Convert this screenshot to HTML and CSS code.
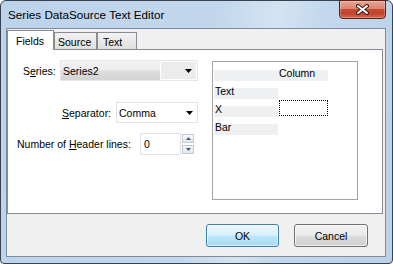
FILE: index.html
```html
<!DOCTYPE html>
<html>
<head>
<meta charset="utf-8">
<title>Series DataSource Text Editor</title>
<link rel="stylesheet" href="styles.css">
</head>
<body>
<div class="window">
  <div class="titlebar">
    <span class="title">Series DataSource Text Editor</span>
    <div class="close">
      <svg width="13" height="11" viewBox="0 0 13 11">
        <path d="M2 2 L11 9 M11 2 L2 9" stroke="#3b1a14" stroke-width="4" stroke-linecap="round"/>
        <path d="M2 2 L11 9 M11 2 L2 9" stroke="#ffffff" stroke-width="2" stroke-linecap="round"/>
      </svg>
    </div>
  </div>
  <div class="client">
    <div class="tabs">
      <div class="tab sel t-fields">Fields</div>
      <div class="tab t-source">Source</div>
      <div class="tab t-text">Text</div>
    </div>
    <div class="panel">
      <div class="form">
        <div class="row r1">
          <span class="lbl l1">S<u>e</u>ries:</span>
          <div class="combo ro">
            <span class="val">Series2</span>
            <span class="ddbox">
              <svg width="7" height="4" viewBox="0 0 7 4"><polygon points="0,0 7,0 3.5,4" fill="#000"/></svg>
            </span>
          </div>
        </div>
        <div class="row r2">
          <span class="lbl l2"><u>S</u>eparator:</span>
          <div class="combo ed">
            <span class="val">Comma</span>
            <svg class="arr" width="7" height="4" viewBox="0 0 7 4"><polygon points="0,0 7,0 3.5,4" fill="#000"/></svg>
          </div>
        </div>
        <div class="row r3">
          <span class="lbl l3">Number of <u>H</u>eader lines:</span>
          <div class="edit"><span class="val">0</span></div>
          <div class="spin">
            <span class="sb up"><svg width="5" height="3" viewBox="0 0 5 3"><polygon points="0,3 5,3 2.5,0" fill="#4a5878"/></svg></span>
            <span class="sb dn"><svg width="5" height="3" viewBox="0 0 5 3"><polygon points="0,0 5,0 2.5,3" fill="#4a5878"/></svg></span>
          </div>
        </div>
      </div>
      <div class="grid">
        <div class="grow hdr"><div class="fc"></div><div class="dc band">Column</div></div>
        <div class="grow"><div class="fc">Text</div><div class="dc"></div></div>
        <div class="grow"><div class="fc">X</div><div class="dc"><div class="focus"></div></div></div>
        <div class="grow"><div class="fc">Bar</div><div class="dc"></div></div>
      </div>
    </div>
    <div class="buttons">
      <div class="btn ok">OK</div>
      <div class="btn cancel">Cancel</div>
    </div>
  </div>
</div>
</body>
</html>
```
FILE: styles.css
```css
* { box-sizing: border-box; }
html, body { margin: 0; padding: 0; }
body {
  width: 393px;
  height: 264px;
  overflow: hidden;
  background: #ffffff;
  font-family: "Liberation Sans", Arial, sans-serif;
  font-size: 10.5px;
  color: #000;
}
u { text-decoration: underline; text-underline-offset: 1px; }

.window {
  width: 393px;
  height: 264px;
  border: 1px solid #39434f;
  border-radius: 6px 6px 4px 4px;
  background: linear-gradient(100deg, #bcd3ea 0%, #c2d7ec 50%, #d3e3f2 64%, #c3d8ed 74%, #bad1e9 100%);
  padding: 0 6px 6px 5px;
  display: flex;
  flex-direction: column;
}

.titlebar {
  height: 27px;
  flex: none;
  display: flex;
  align-items: flex-start;
}
.title {
  font-size: 11.7px;
  line-height: 14px;
  margin: 7px 0 0 2px;
  color: #000;
}
.close {
  margin-left: auto;
  margin-top: -1px;
  width: 47px;
  height: 19px;
  border: 1px solid #5a2017;
  border-radius: 0 0 4px 4px;
  background: linear-gradient(#e8a697 0%, #dd8672 44%, #c84a33 50%, #c2412a 72%, #d5674f 100%);
  display: flex;
  align-items: center;
  justify-content: center;
  box-shadow: inset 0 0 0 1px rgba(255,255,255,0.25);
}

.client {
  height: 229px;
  flex: none;
  border: 1px solid #7d8c9d;
  background: #f0f0f0;
  display: flex;
  flex-direction: column;
}

.tabs {
  height: 20px;
  flex: none;
  display: flex;
  align-items: flex-end;
  position: relative;
  z-index: 2;
}
.tab {
  height: 17px;
  border: 1px solid #898c95;
  border-bottom: none;
  background: linear-gradient(#f2f2f2, #e0e0e0);
  line-height: 12px;
  padding-top: 3px;
  white-space: nowrap;
}
.tab + .tab { border-left: 1px solid #898c95; }
.tab.sel {
  height: 20px;
  margin-bottom: -1px;
  background: #ffffff;
  padding-top: 4px;
}
.t-fields { width: 47px; padding-left: 8px; }
.t-source { width: 43px; padding-left: 3px; }
.t-text { width: 40px; padding-left: 5px; }

.panel {
  height: 165px;
  flex: none;
  margin-right: 2px;
  border: 1px solid #898c95;
  background: #ffffff;
  display: flex;
  position: relative;
  z-index: 1;
}

.form {
  width: 204px;
  flex: none;
  display: flex;
  flex-direction: column;
}
.row {
  display: flex;
  align-items: center;
}
.r1 { margin-top: 10px; height: 21px; padding-left: 15px; }
.r2 { margin-top: 21px; height: 21px; padding-left: 54px; }
.r3 { margin-top: 10px; height: 22px; padding-left: 9px; }
.lbl { white-space: nowrap; }
.l1 { width: 37px; }
.l2 { width: 54px; }
.l3 { width: 123px; }

.combo {
  height: 21px;
  display: flex;
  align-items: center;
}
.combo .val { flex: 1; padding-left: 2px; }
.combo.ro {
  width: 138px;
  border: 1px solid #e7e7e7;
  background: linear-gradient(#f4f4f4 0%, #ececec 45%, #dedede 55%, #d3d3d3 100%);
}
.ddbox {
  width: 37px;
  height: 19px;
  border: 1px solid #ffffff;
  background: #ececec;
  display: flex;
  align-items: center;
  justify-content: flex-end;
  padding-right: 4px;
}
.combo.ed {
  width: 82px;
  border: 1px solid #e2e3ea;
  background: #ffffff;
  padding-right: 4px;
}
.combo.ed .arr { flex: none; }

.edit {
  width: 41px;
  height: 22px;
  border: 1px solid #dfe2e8;
  background: #fff;
  display: flex;
  align-items: center;
  padding-left: 3px;
}
.spin {
  margin-left: 1px;
  width: 12px;
  height: 20px;
  display: flex;
  flex-direction: column;
  justify-content: space-between;
}
.sb {
  height: 9px;
  border: 1px solid #c2cad4;
  background: linear-gradient(#f6f8fa, #e4e9ef);
  display: flex;
  align-items: center;
  justify-content: center;
}

.grid {
  margin-top: 11px;
  width: 146px;
  height: 139px;
  border: 1px solid #a3a3a3;
  padding: 1px 0 0 1px;
}
.grow {
  display: flex;
  height: 18px;
  line-height: 20px;
}
.fc {
  width: 64px;
  padding-left: 1px;
  background: linear-gradient(transparent 7px, #eff0f2 7px);
}
.dc {
  width: 50px;
  padding-left: 1px;
}
.dc.band { background: linear-gradient(transparent 7px, #eff0f2 7px); }
.focus {
  width: 49px;
  height: 16px;
  margin-top: 1px;
  margin-left: 0;
  border: 1px dotted #000;
}

.buttons {
  flex: 1;
  display: flex;
  justify-content: flex-end;
  align-items: flex-start;
  padding: 10px 17px 0 0;
  gap: 15px;
}
.btn {
  height: 23px;
  border-radius: 3px;
  display: flex;
  align-items: center;
  justify-content: center;
}
.ok {
  width: 73px;
  border: 1px solid #3c7fb1;
  background: linear-gradient(#eaf6fd 0%, #d9f0fc 48%, #bee6fd 52%, #a7d9f5 100%);
  box-shadow: inset 0 0 0 1px rgba(255,255,255,0.6);
}
.cancel {
  width: 74px;
  border: 1px solid #707070;
  background: linear-gradient(#f2f2f2 0%, #ebebeb 48%, #dddddd 52%, #cfcfcf 100%);
  box-shadow: inset 0 0 0 1px rgba(255,255,255,0.7);
}
```
